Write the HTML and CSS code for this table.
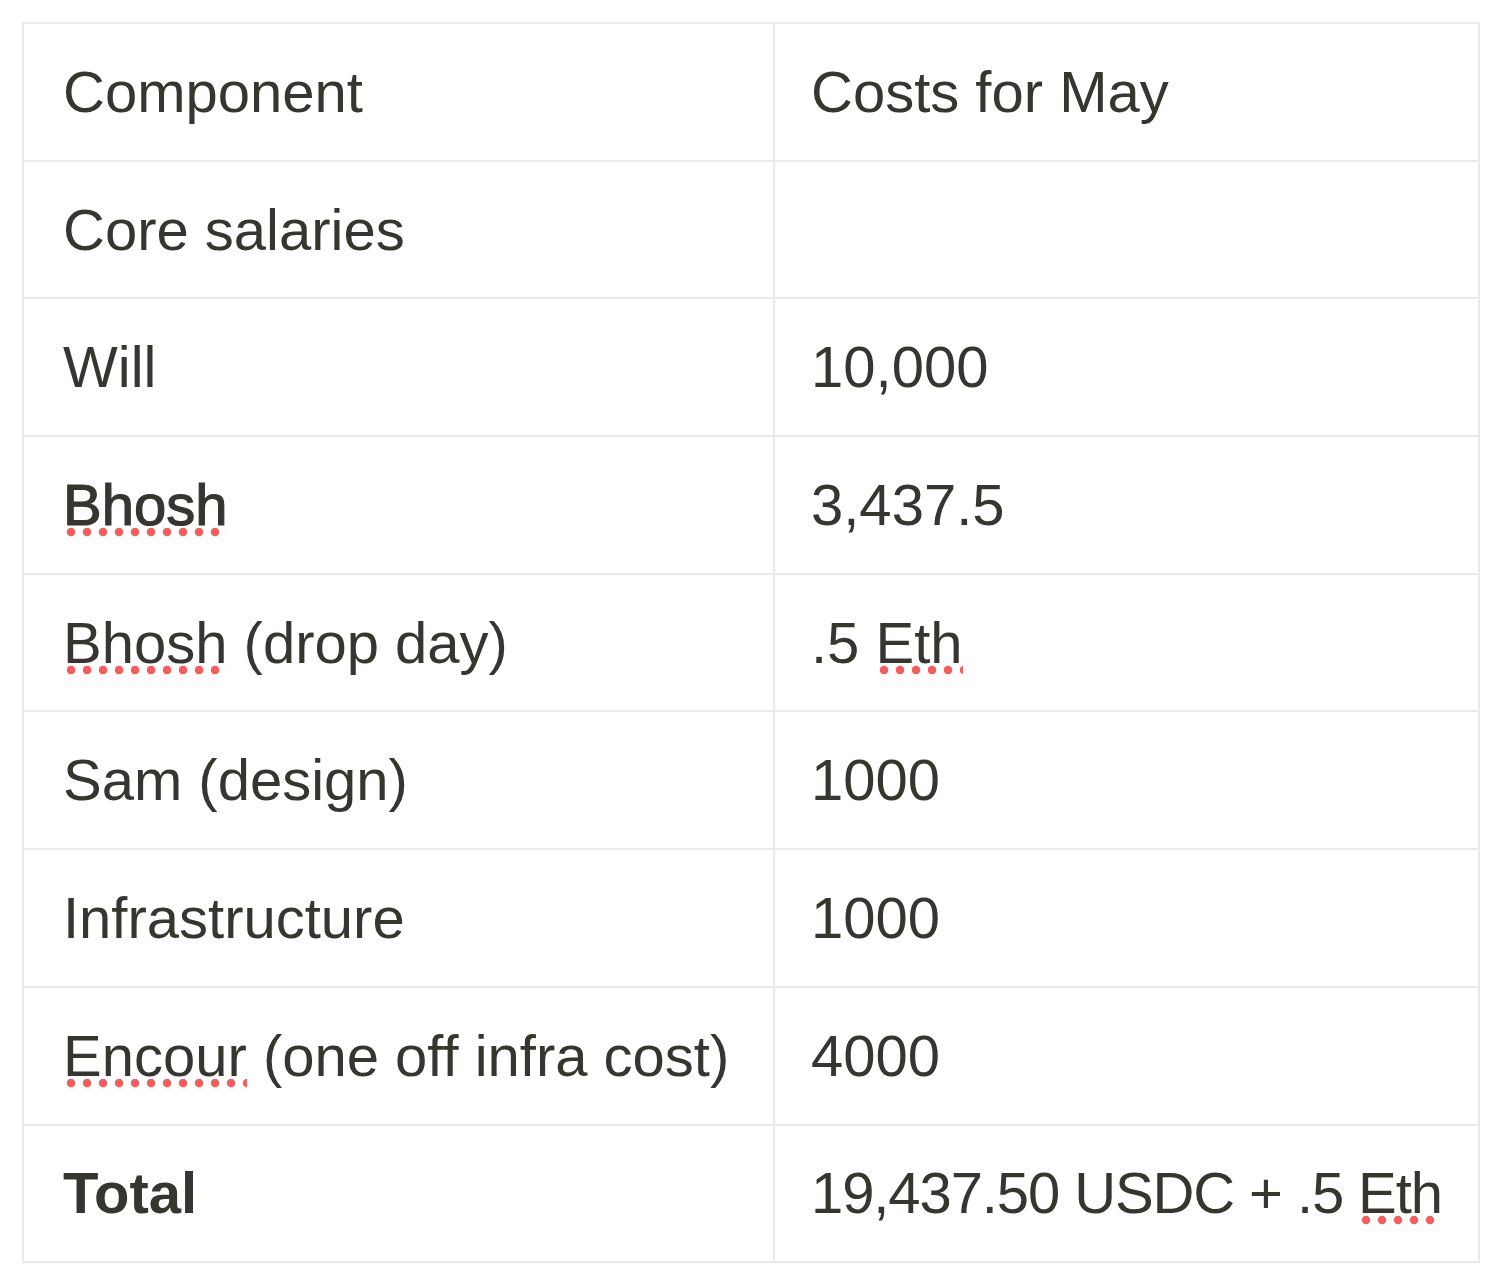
FILE: index.html
```html
<!DOCTYPE html>
<html lang="en">
<head>
    <meta charset="UTF-8">
    <meta name="viewport" content="width=device-width, initial-scale=1.0">
    <title>Costs for May</title>
    <link rel="stylesheet" href="styles.css">
</head>
<body>
    <div class="page">
        <table class="costs">
            <colgroup>
                <col class="col-name">
                <col class="col-cost">
            </colgroup>
            <tr>
                <td>Component</td>
                <td>Costs for May</td>
            </tr>
            <tr>
                <td>Core salaries</td>
                <td></td>
            </tr>
            <tr>
                <td>Will</td>
                <td>10,000</td>
            </tr>
            <tr>
                <td><span class="typo medium">Bhosh</span></td>
                <td>3,437.5</td>
            </tr>
            <tr>
                <td><span class="typo">Bhosh</span> (drop day)</td>
                <td>.5 <span class="typo">Eth</span></td>
            </tr>
            <tr>
                <td>Sam (design)</td>
                <td>1000</td>
            </tr>
            <tr>
                <td>Infrastructure</td>
                <td>1000</td>
            </tr>
            <tr>
                <td><span class="typo">Encour</span> (one off infra cost)</td>
                <td>4000</td>
            </tr>
            <tr>
                <td><b>Total</b></td>
                <td class="tight">19,437.50 USDC + .5 <span class="typo">Eth</span></td>
            </tr>
        </table>
    </div>
</body>
</html>
```

FILE: styles.css
```css
* {
    margin: 0;
    padding: 0;
    box-sizing: border-box;
}

body {
    font-family: "Liberation Sans", Arial, sans-serif;
    background-color: #fff;
    color: #37352f;
}

.page {
    padding: 22px 0 0 22px;
}

.costs {
    border-collapse: collapse;
    table-layout: fixed;
    width: 1456px;
    font-size: 58px;
}

.col-name {
    width: 751px;
}

.col-cost {
    width: 705px;
}

.costs td {
    border: 2px solid #e9e9e7;
    height: 137.7px;
    padding: 0 0 0 39px;
    vertical-align: middle;
    white-space: nowrap;
    line-height: 1;
}

.costs td + td {
    padding-left: 36px;
}

.costs b {
    font-weight: bold;
}

.medium {
    -webkit-text-stroke: 1.2px #37352f;
}

.tight {
    letter-spacing: -1.1px;
}

/* spell-check squiggle */
.typo {
    background-image: radial-gradient(circle, #fc5b5b 3.8px, transparent 4.6px);
    background-size: 16px 10px;
    background-repeat: repeat-x;
    background-position: 0 100%;
}
```
